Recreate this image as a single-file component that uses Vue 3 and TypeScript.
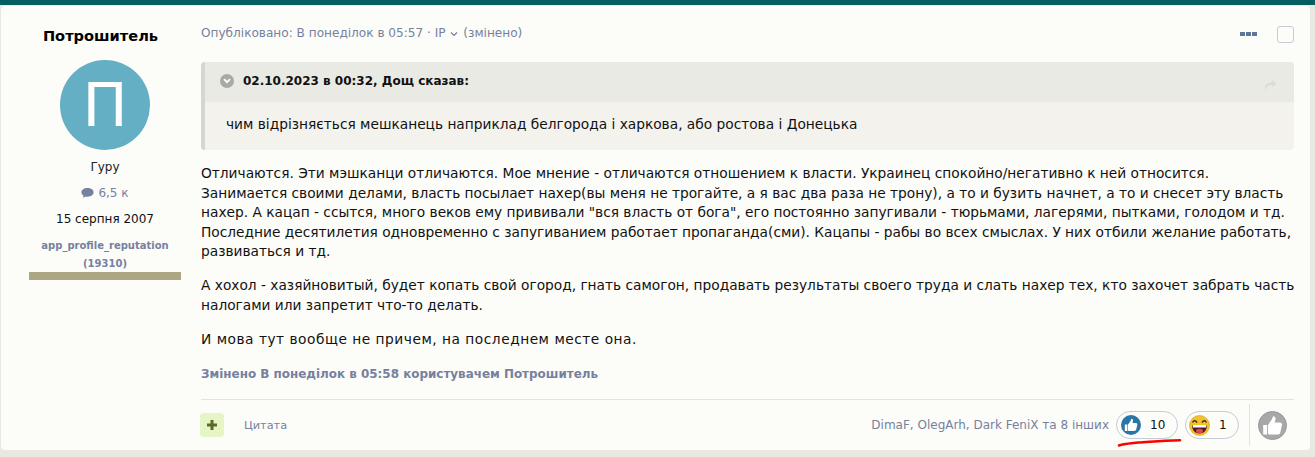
<script setup lang="ts">
const bodyParagraphs = [
  [
    "Отличаются. Эти мэшканци отличаются. Мое мнение - отличаются отношением к власти. Украинец спокойно/негативно к ней относится.",
    "Занимается своими делами, власть посылает нахер(вы меня не трогайте, а я вас два раза не трону), а то и бузить начнет, а то и снесет эту власть",
    "нахер. А кацап - ссытся, много веков ему прививали \"вся власть от бога\", его постоянно запугивали - тюрьмами, лагерями, пытками, голодом и тд.",
    "Последние десятилетия одновременно с запугиванием работает пропаганда(сми). Кацапы - рабы во всех смыслах. У них отбили желание работать,",
    "развиваться и тд.",
  ],
  [
    "А хохол - хазяйновитый, будет копать свой огород, гнать самогон, продавать результаты своего труда и слать нахер тех, кто захочет забрать часть",
    "налогами или запретит что-то делать.",
  ],
  ["И мова тут вообще не причем, на последнем месте она."],
];

const thumbPath =
  "M4 6.6 6.4 3.2C7 2.2 7 1.2 7.5.8 8.8.8 9.3 2 8.9 3.4L8.4 5H12C13.1 5 13.6 6 13.2 7L12.2 11.6C12 12.5 11.2 13 10.2 13H5C4.4 13 4 12.6 4 12ZM.8 6.6H3.4V13H.8Z";
</script>

<template>
  <div class="page">
    <div class="topbar"></div>
    <article class="post">
      <aside class="author">
        <h3 class="name">Потрошитель</h3>
        <div class="avatar">П</div>
        <div class="rank">Гуру</div>
        <div class="count">
          <svg width="13" height="12" viewBox="0 0 13 12"><path d="M6.5 1C3 1 .4 2.9.4 5.3c0 1.4.9 2.6 2.2 3.4-.1.8-.6 1.5-1.2 2.1 1.2-.1 2.3-.6 3.1-1.3.6.1 1.3.2 2 .2 3.5 0 6.1-1.9 6.1-4.4S10 1 6.5 1z" fill="#76819f"/></svg>
          <span>6,5 к</span>
        </div>
        <div class="joined">15 серпня 2007</div>
        <div class="rep">app_profile_reputation</div>
        <div class="rep rep-num">(19310)</div>
        <div class="rep-bar"></div>
      </aside>

      <div class="main">
        <header class="meta">
          <span class="meta-text">Опубліковано: В понеділок в 05:57 · IP
            <svg class="chev" width="8" height="6" viewBox="0 0 8 6"><path d="M1 1.500l3 3 3-3" fill="none" stroke="#76819f" stroke-width="1.200"/></svg>
            (змінено)</span>
          <div class="meta-tools">
            <span class="dots"><i></i><i></i><i></i></span>
            <span class="check"></span>
          </div>
        </header>

        <blockquote class="quote">
          <div class="quote-head">
            <span class="quote-toggle">
              <svg width="8" height="6" viewBox="0 0 8 6"><path d="M1 1.200l3 3 3-3" fill="none" stroke="#fff" stroke-width="1.800"/></svg>
            </span>
            <strong>02.10.2023 в 00:32, Дощ сказав:</strong>
            <svg class="share" width="13" height="11" viewBox="0 0 14 12"><path d="M8.500 0l5 4-5 4V5.500C5 5.300 2.500 6.500 1 11.500-.2 6.500 2.500 2.800 8.500 2.500z" fill="#dcdbd4"/></svg>
          </div>
          <div class="quote-body">чим відрізняється мешканець наприклад белгорода і харкова, або ростова і Донецька</div>
        </blockquote>

        <div class="content">
          <p v-for="(lines, i) in bodyParagraphs" :key="i">
            <span v-for="line in lines" :key="line" class="line">{{ line }}</span>
          </p>
        </div>

        <div class="edited">Змінено В понеділок в 05:58 користувачем Потрошитель</div>

        <footer class="controls">
          <div class="controls-left">
            <span class="plus">
              <svg width="10" height="10" viewBox="0 0 10 10"><path d="M3.500 0h3v3.500H10v3H6.500V10h-3V6.500H0v-3h3.500z" fill="#5c6b25"/></svg>
            </span>
            <span class="cite">Цитата</span>
          </div>
          <div class="controls-right">
            <span class="who">DimaF, OlegArh, Dark FeniX та 8 інших</span>
            <span class="pill pill-like">
              <span class="like-ico">
                <svg width="14" height="14" viewBox="0 0 14 14"><path :d="thumbPath" fill="#fff"/></svg>
              </span>
              <span class="n">10</span>
              <svg class="scrawl" width="66" height="10" viewBox="0 0 66 10"><path d="M2 7.500C5 6 12 5.500 21 4.500 33 3.900 43 2.500 63 2.200" fill="none" stroke="#f00" stroke-width="2.600" stroke-linecap="round"/></svg>
            </span>
            <span class="pill pill-haha">
              <svg width="21" height="21" viewBox="0 0 21 21">
                <circle cx="10.500" cy="10.500" r="10" fill="#f3c22d" stroke="#c99a17" stroke-width=".6"/>
                <path d="M3.500 7.500q2-3.500 4.500 0M13 7.500q2.500-3.500 4.500 0" fill="none" stroke="#3d2a10" stroke-width="1.400"/>
                <path d="M3 10h15c0 5-3 8.500-7.500 8.500S3 15 3 10z" fill="#4a1d16"/>
                <path d="M3.500 10h14l-.5 2.500h-13z" fill="#fff"/>
                <ellipse cx="10.500" cy="16" rx="3.500" ry="2.200" fill="#e2445c"/>
              </svg>
              <span class="n">1</span>
            </span>
            <span class="react-sep">
              <span class="react-btn">
                <svg width="21" height="21" viewBox="0 0 14 14"><path :d="thumbPath" fill="#fff"/></svg>
              </span>
            </span>
          </div>
        </footer>
      </div>
    </article>
  </div>
</template>

<style>
html, body { margin: 0; background: #e9e8e1; }
</style>

<style scoped>
.page {
  width: 1315px;
  height: 457px;
  overflow: hidden;
  background: #e9e8e1;
  font-family: "DejaVu Sans", Verdana, sans-serif;
  font-size: 13.74px;
  color: #111;
}
.topbar { height: 5px; background: #045e62; }
.post {
  display: flex;
  width: 1309px;
  height: 444px;
  margin: 1px 0 0 1px;
  background: #fcfcf8;
  border-radius: 4px;
  box-sizing: border-box;
}
.author {
  width: 208px;
  margin-right: -8px;
  flex: none;
  display: flex;
  flex-direction: column;
  align-items: center;
  padding-top: 20px;
  box-sizing: border-box;
}
.name { margin: 0 9px 0 0; font-size: 14.6px; line-height: 19px; font-weight: 700; color: #000; }
.avatar {
  width: 90px;
  height: 90px;
  margin-top: 15px;
  border-radius: 50%;
  background: #65afc5;
  color: #fff;
  font-size: 60px;
  line-height: 90px;
  text-align: center;
}
.rank { margin-top: 9px; font-size: 12px; line-height: 16px; color: #222; }
.count {
  margin-top: 10px;
  display: flex;
  align-items: center;
  gap: 4px;
  font-size: 12px;
  line-height: 16px;
  color: #76819f;
}
.joined { margin-top: 10px; font-size: 12px; line-height: 16px; }
.rep { margin-top: 12px; font-size: 10px; line-height: 14px; font-weight: 700; color: #76819f; }
.rep-num { margin-top: 4px; font-size: 10px; }
.rep-bar { width: 152px; height: 8px; margin-top: 1px; background: #aca782; }

.main { flex: 1; min-width: 0; padding-right: 16px; }
.meta {
  height: 56px;
  display: flex;
  justify-content: space-between;
  align-items: flex-start;
  padding-top: 19px;
  box-sizing: border-box;
  font-size: 12.1px;
  line-height: 16px;
  color: #76819f;
}
.chev { margin: 0 1px; }
.meta-tools { display: flex; align-items: center; gap: 20px; margin-top: 1px; }
.dots { display: flex; gap: 1px; margin-top: -1px; }
.dots i { width: 5px; height: 4px; background: #5e7699; }
.check {
  width: 15px;
  height: 15px;
  border: 1px solid #c4ccd8;
  border-radius: 3px;
}
.quote {
  margin: 0;
  border-left: 4px solid #d6d5cf;
  border-radius: 4px;
  background: #f3f2ed;
  overflow: hidden;
}
.quote-head {
  height: 40px;
  display: flex;
  align-items: center;
  padding: 0 17px 2px 15px;
  box-sizing: border-box;
  background: #eaeae4;
  font-size: 12px;
  color: #111;
}
.quote-toggle {
  width: 14px;
  height: 14px;
  margin-right: 9px;
  border-radius: 50%;
  background: #aaa9a5;
  display: flex;
  align-items: center;
  justify-content: center;
}
.share { margin-left: auto; margin-top: 8px; }
.quote-body { height: 48px; padding: 13px 0 0 21px; box-sizing: border-box; line-height: 19px; }
.content { margin-top: 14px; line-height: 19.6px; }
.content p { margin: 0 0 14.500px; }
.content p:last-child .line { letter-spacing: .52px; }
.line { display: block; white-space: nowrap; }
.edited { margin-top: 16.500px; font-size: 11.95px; line-height: 16px; font-weight: 700; color: #76819f; }
.controls {
  margin-top: 17px;
  border-top: 1px solid #e3e3dd;
  height: 50px;
  display: flex;
  justify-content: space-between;
  align-items: center;
}
.controls-left { display: flex; align-items: center; gap: 20px; }
.plus {
  width: 24px;
  height: 24px;
  margin-left: -1px;
  border-radius: 4px;
  background: #e5f5c6;
  display: flex;
  align-items: center;
  justify-content: center;
}
.cite { font-size: 11.3px; color: #76819f; }
.controls-right { display: flex; align-items: center; padding-right: 7px; }
.who { font-size: 12px; color: #76819f; margin-right: 7px; }
.pill {
  position: relative;
  display: flex;
  align-items: center;
  height: 28px;
  border: 1px solid #c4ccd8;
  border-radius: 14px;
  box-sizing: border-box;
  font-size: 12px;
}
.pill-like { width: 62px; padding-left: 4px; }
.pill-haha { width: 54px; margin-left: 7px; padding-left: 3px; }
.like-ico {
  width: 20px;
  height: 20px;
  border-radius: 50%;
  background: #2a75a6;
  display: flex;
  align-items: center;
  justify-content: center;
}
.pill-like .n { margin-left: 9px; }
.pill-haha .n { margin-left: 9px; }
.scrawl { position: absolute; left: 0; top: 26px; }
.react-sep {
  margin-left: 10px;
  padding-left: 8px;
  height: 42px;
  border-left: 1px solid #e3e3dd;
  display: flex;
  align-items: center;
}
.react-btn {
  width: 27px;
  height: 27px;
  border: 1px solid #979797;
  border-radius: 50%;
  background: #a8a8a8;
  display: flex;
  align-items: center;
  justify-content: center;
}
</style>
